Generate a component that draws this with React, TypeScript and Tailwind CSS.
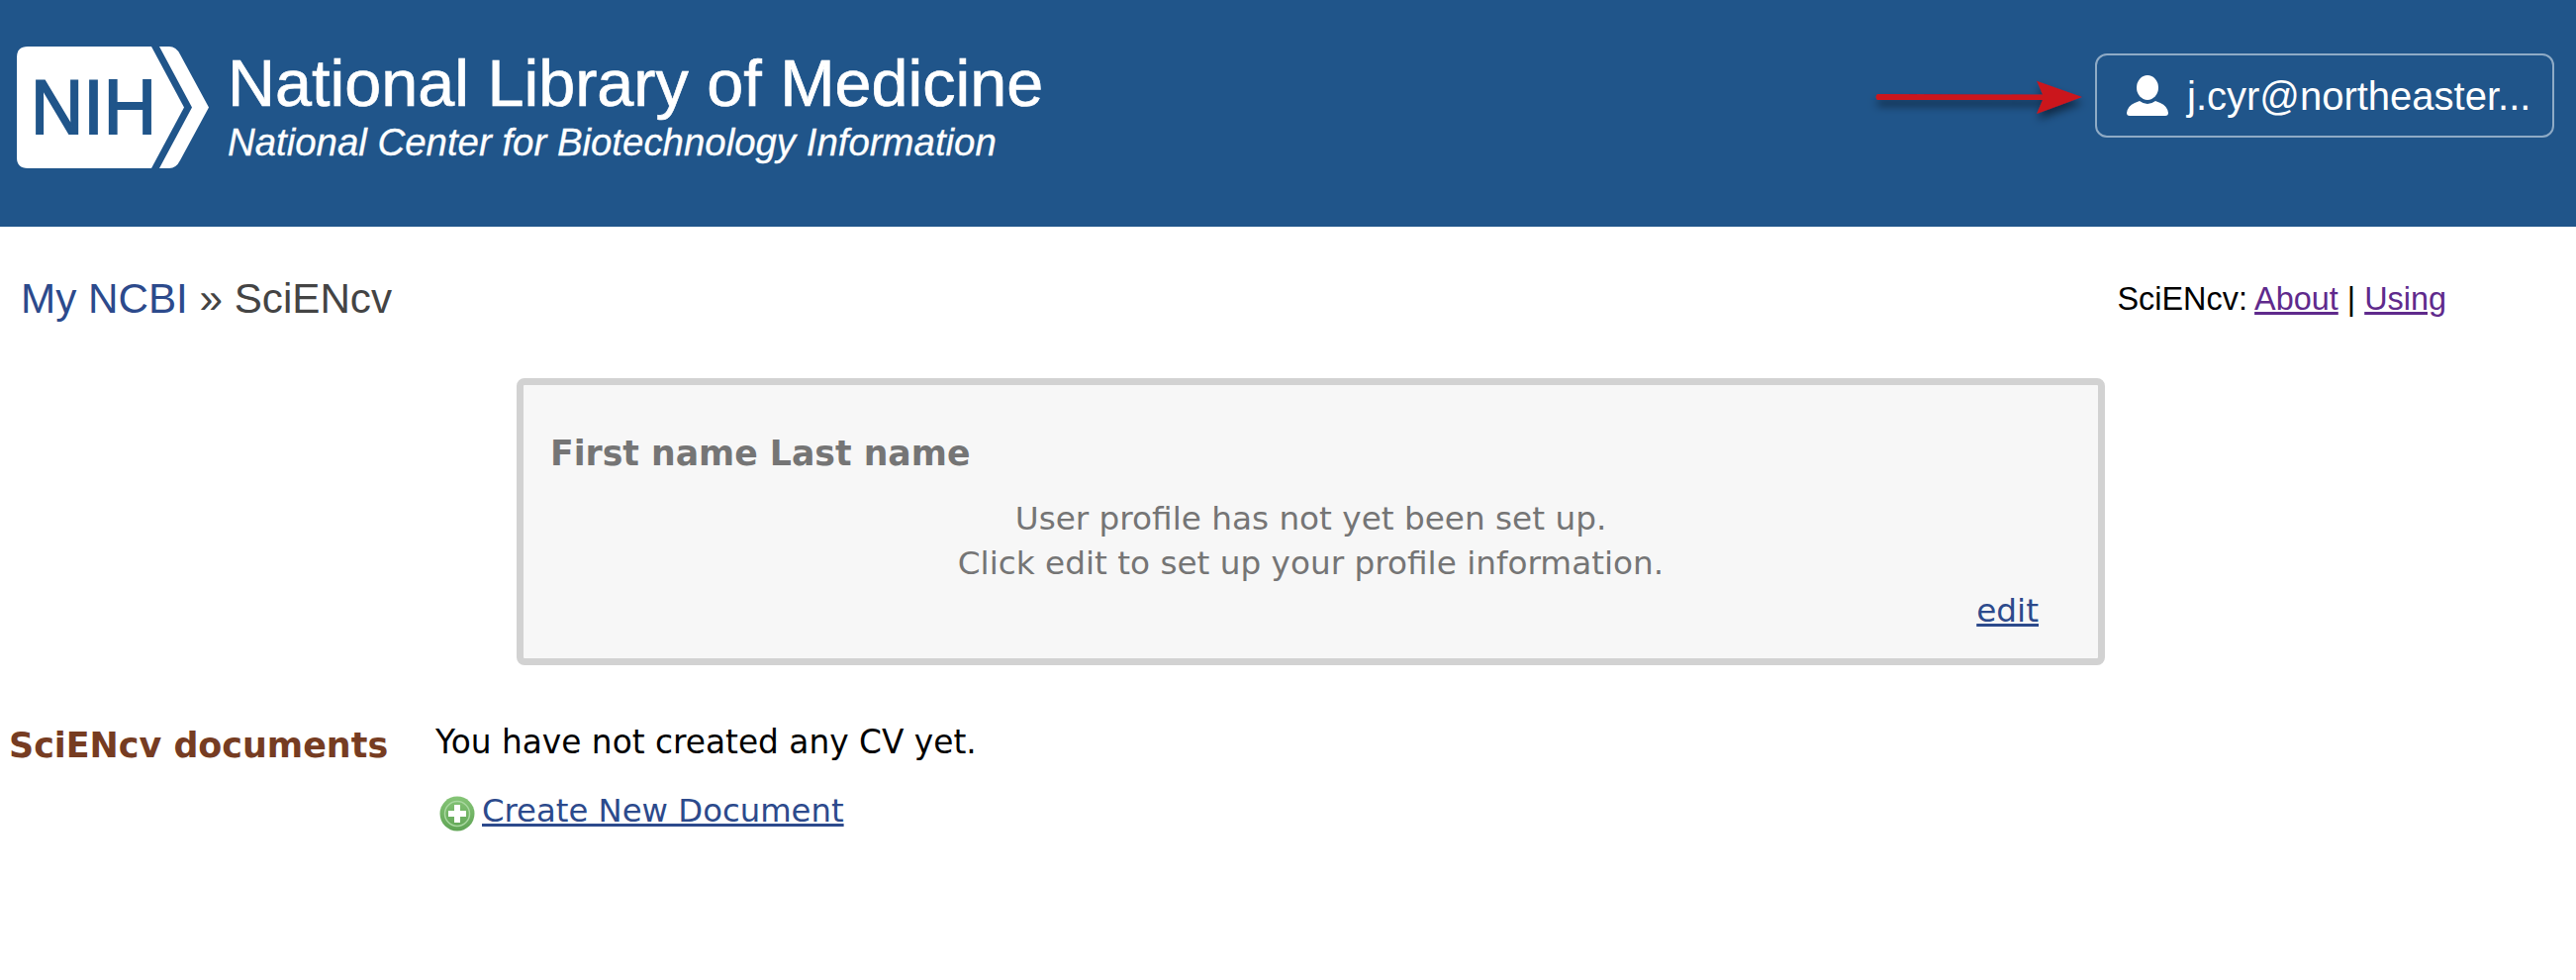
import React from 'react'

function NihLogo() {
  return (
    <svg width="195" height="124" viewBox="0 0 195 124" className="shrink-0">
      <path d="M11 0H136L169 61.5L136 123H11Q0 123 0 112V11Q0 0 11 0Z" fill="#fff" />
      <path d="M144 0H154Q161 0 165 8L194 61.5L165 115Q161 123 154 123H144L177 61.5Z" fill="#fff" />
      <text x="14" y="88" fontFamily="Liberation Sans" fontSize="78" fill="#20558a" textLength="127" lengthAdjust="spacingAndGlyphs" stroke="#20558a" strokeWidth="2">NIH</text>
    </svg>
  )
}

function UserIcon() {
  return (
    <svg width="42" height="42" viewBox="0 0 42 42" className="shrink-0">
      <ellipse cx="21" cy="12.500" rx="11" ry="12.500" fill="#fff" />
      <path d="M3 41Q0 41 0 38Q1 31 8 28L13 26Q21 32 29 26L34 28Q41 31 42 38Q42 41 39 41Z" fill="#fff" />
    </svg>
  )
}

function PlusIcon() {
  return (
    <svg width="36" height="36" viewBox="0 0 36 36" className="shrink-0">
      <defs>
        <linearGradient id="plus-green" x1="0" y1="0" x2="0" y2="1">
          <stop offset="0" stopColor="#86c577" />
          <stop offset="1" stopColor="#5fa455" />
        </linearGradient>
      </defs>
      <circle cx="18" cy="18" r="17.500" fill="url(#plus-green)" />
      <circle cx="18" cy="18" r="12.500" fill="none" stroke="#a9d8a0" strokeWidth="1.500" />
      <path d="M15 9H21V15H27V21H21V27H15V21H9V15H15Z" fill="#fff" />
    </svg>
  )
}

function RedArrow() {
  return (
    <svg width="240" height="60" viewBox="0 0 240 60" className="absolute left-[1884px] top-[72px]">
      <defs>
        <filter id="arrow-shadow" x="-10%" y="-50%" width="120%" height="200%">
          <feDropShadow dx="1" dy="6" stdDeviation="4" floodColor="#000" floodOpacity="0.5" />
        </filter>
      </defs>
      <path
        d="M13 23L180 23.500L174 9.700L220 26L174 43L180 29L13 29Q10 26 13 23Z"
        fill="#cb141e"
        filter="url(#arrow-shadow)"
      />
    </svg>
  )
}

export default function App() {
  return (
    <div className="min-h-screen bg-white font-['Liberation_Sans',sans-serif]">
      {/* Header */}
      <header className="relative flex h-[229px] items-start bg-[#20558a] pl-[17px] pt-[47px] text-white">
        <NihLogo />
        <div className="ml-[18px] mt-[7px] [-webkit-text-stroke:0.7px_white]">
          <div className="text-[66.500px] leading-[61px]">National Library of Medicine</div>
          <div className="mt-[11px] text-[38.400px] leading-[36px] italic [-webkit-text-stroke:0.3px_white]">National Center for Biotechnology Information</div>
        </div>
        <RedArrow />
        <button className="ml-auto mr-[22px] mt-[7px] flex h-[85px] w-[464px] items-center rounded-[12px] border-2 border-[#8fabc6] pl-[30px]">
          <UserIcon />
          <span className="ml-[19px] text-[40px]">j.cyr@northeaster...</span>
        </button>
      </header>

      {/* Breadcrumb */}
      <div className="mt-[53px] flex items-start justify-between pl-[21px] pr-[131px] leading-[40px]">
        <div className="text-[42.200px] text-[#444444]">
          <a className="text-[#2c4a8c]">My NCBI</a> » SciENcv
        </div>
        <div className="text-[32.400px] text-black">
          SciENcv: <a className="text-[#5f2a8c] underline">About</a> | <a className="text-[#5f2a8c] underline">Using</a>
        </div>
      </div>

      <div className="font-['DejaVu_Sans',sans-serif] text-[32.700px]">
        {/* Profile box */}
        <div className="ml-[522px] mt-[60px] h-[290px] w-[1605px] rounded-[8px] border-[7px] border-[#d2d2d2] bg-[#f7f7f7] pt-[47px] leading-[45px] text-[#757575]">
          <div className="pl-[27px] text-[34.700px] font-bold">First name Last name</div>
          <div className="mt-[21px] text-center">
            <div>User profile has not yet been set up.</div>
            <div>Click edit to set up your profile information.</div>
          </div>
          <div className="mt-[3px] pr-[60px] text-right">
            <a className="text-[#2c4a8c] underline">edit</a>
          </div>
        </div>

        {/* Documents */}
        <div className="mt-[56px] flex leading-[45px]">
          <div className="mt-[3px] w-[440px] pl-[9px] text-[34.900px] font-bold text-[#763c22]">SciENcv documents</div>
          <div>
            <div className="text-[32.800px] text-black">You have not created any CV yet.</div>
            <div className="mt-[24px] flex items-start">
              <div className="ml-[4px] mr-[7px] mt-[7px]">
                <PlusIcon />
              </div>
              <a className="text-[32.300px] text-[#2c4a8c] underline">Create New Document</a>
            </div>
          </div>
        </div>
      </div>
    </div>
  )
}
